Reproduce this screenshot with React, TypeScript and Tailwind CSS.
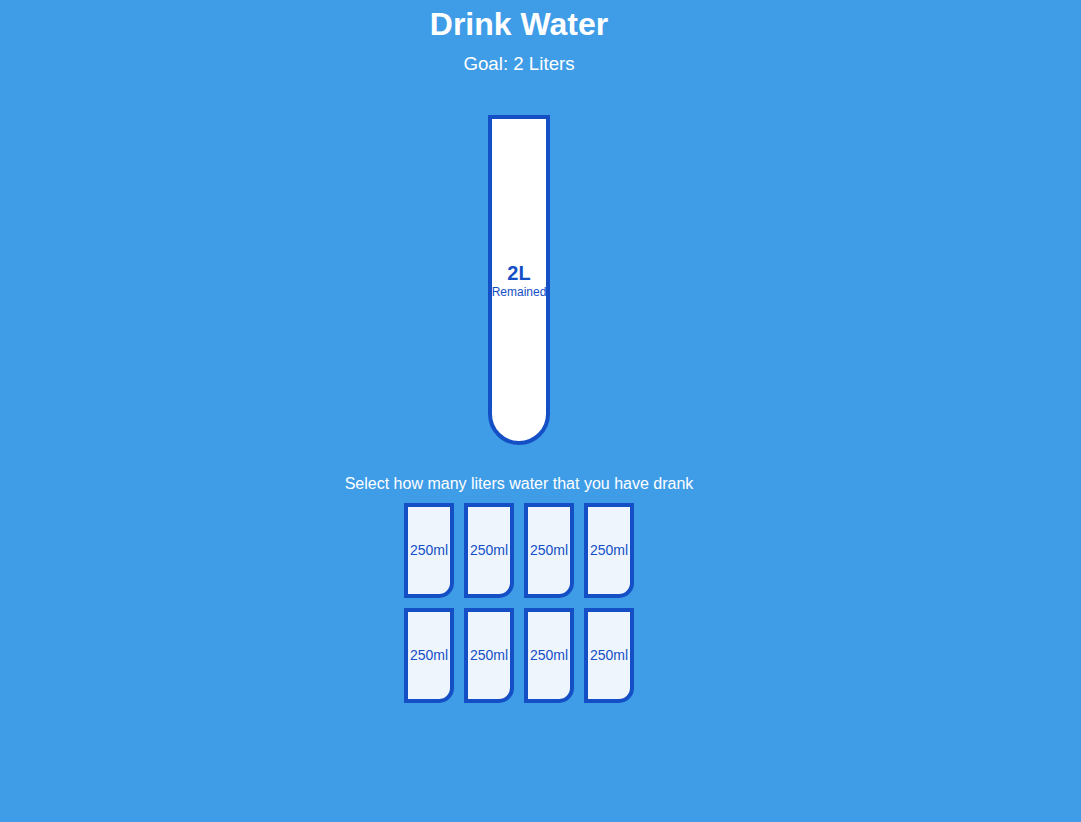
import React from 'react';

const SmallCup = () => (
  <div className="w-[50px] h-[95px] m-[5px] flex items-center justify-center border-4 border-[#144fc6] rounded-br-[15px] bg-[#eef5fd] text-[#144fc6] text-[14px]">
    250ml
  </div>
);

const App: React.FC = () => {
  return (
    <div className="min-h-[822px] bg-[#3f9de8] text-white font-['Liberation_Sans',Arial,sans-serif]">
      <div className="w-[1038px] flex flex-col items-center">
        <h1 className="mt-[6px] text-[32px] leading-[37px] font-bold">Drink Water</h1>
        <h3 className="mt-[10px] text-[18.72px] leading-[21px]">Goal: 2 Liters</h3>

        {/* big cup */}
        <div className="mt-[41px] w-[62px] h-[330px] bg-white border-4 border-[#144fc6] rounded-b-[31px] flex flex-col items-center justify-center text-[#144fc6]">
          <span className="text-[20px] leading-[23px] font-bold">2L</span>
          <small className="text-[12px] leading-[14px]">Remained</small>
        </div>

        <p className="mt-[30px] text-[16px] leading-[18px]">Select how many liters water that you have drank</p>

        <div className="mt-[5px] w-[240px] flex flex-wrap justify-center">
          {Array.from({ length: 8 }).map((_, i) => (
            <SmallCup key={i} />
          ))}
        </div>
      </div>
    </div>
  );
};

export default App;
